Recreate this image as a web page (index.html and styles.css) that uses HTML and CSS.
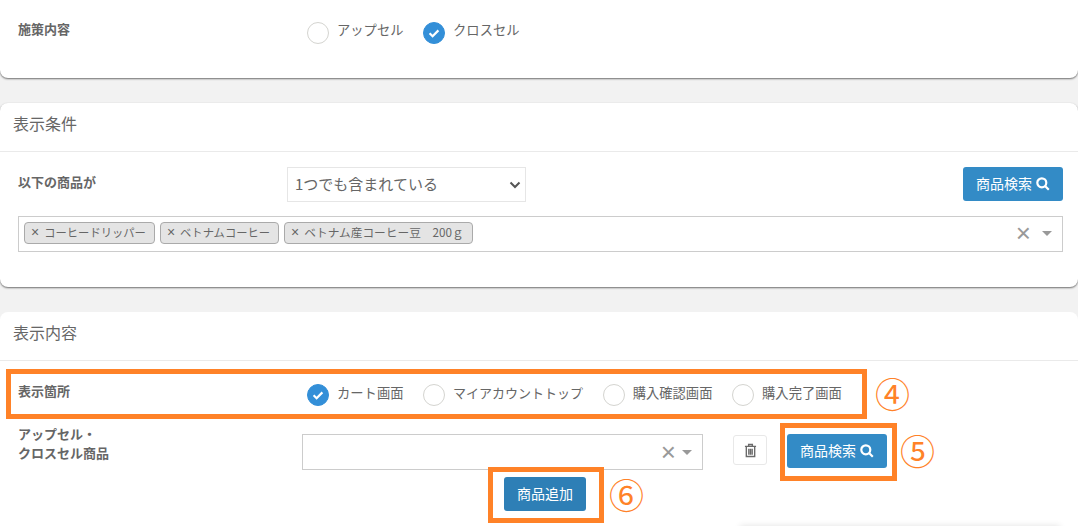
FILE: index.html
```html
<!DOCTYPE html>
<html lang="ja">
<head>
<meta charset="utf-8">
<title>表示設定</title>
<link rel="stylesheet" href="styles.css">
</head>
<body>
<section class="card card-first">
  <div class="row row-first">
    <div class="label">施策内容</div>
    <div class="radios">
      <label class="radio"><span class="mark"></span>アップセル</label>
      <label class="radio"><span class="mark on"><svg viewBox="0 0 22 22"><path d="M6.600 11.200l3 3 5.800-5.800"/></svg></span>クロスセル</label>
    </div>
  </div>
</section>

<section class="card card-cond">
  <h2 class="card-title">表示条件</h2>
  <div class="cond-body">
    <div class="cond-top">
      <div class="label label-cond">以下の商品が</div>
      <div class="select"><span>1つでも含まれている</span><svg class="chev" viewBox="0 0 12 8"><path d="M1.500 1.500L6 6l4.500-4.500"/></svg></div>
      <button class="btn btn-top"><span>商品検索</span><svg class="search" viewBox="0 0 14 14"><circle cx="5.800" cy="5.800" r="4.500"/><path d="M9 9l3.800 3.800"/></svg></button>
    </div>
    <div class="multi">
      <span class="tag tag-a"><i>×</i>コーヒードリッパー</span>
      <span class="tag tag-a"><i>×</i>ベトナムコーヒー</span>
      <span class="tag"><i>×</i>ベトナム産コーヒー豆　200ｇ</span>
      <span class="clear">×</span><span class="caret"></span>
    </div>
  </div>
</section>

<section class="card card-content">
  <h2 class="card-title">表示内容</h2>
  <div class="place-row">
    <div class="label">表示箇所</div>
    <div class="radios radios-place">
      <label class="radio"><span class="mark on"><svg viewBox="0 0 22 22"><path d="M6.600 11.200l3 3 5.800-5.800"/></svg></span>カート画面</label>
      <label class="radio radio-kana"><span class="mark"></span>マイアカウントトップ</label>
      <label class="radio"><span class="mark"></span>購入確認画面</label>
      <label class="radio"><span class="mark"></span>購入完了画面</label>
    </div>
    <span class="hl hl-place"></span>
    <span class="num num4">④</span>
  </div>
  <div class="product-row">
    <div class="label label-product">アップセル・<br>クロスセル商品</div>
    <div class="product-select"><span class="clear">×</span><span class="caret"></span></div>
    <button class="trash" aria-label="削除"><svg viewBox="0 0 14 16"><path d="M1 3.500h12M5 3.500V1.500h4v2"/><path d="M2.500 4v10.500h9V4M5.200 6v6.500M7 6v6.500M8.800 6v6.500"/></svg></button>
    <div class="hl-wrap">
      <button class="btn"><span>商品検索</span><svg class="search" viewBox="0 0 14 14"><circle cx="5.800" cy="5.800" r="4.500"/><path d="M9 9l3.800 3.800"/></svg></button>
      <span class="hl hl-search"></span>
      <span class="num num5">⑤</span>
    </div>
  </div>
  <div class="add-row">
    <div class="hl-wrap">
      <button class="btn btn-add"><span>商品追加</span></button>
      <span class="hl hl-add"></span>
      <span class="num num6">⑥</span>
    </div>
  </div>
  <div class="next-panel"></div>
</section>
</body>
</html>
```
FILE: styles.css
```css
* { box-sizing: border-box; }
html, body { height: 100%; }
body {
  margin: 0;
  height: 526px;
  overflow: hidden;
  background: #f2f2f2;
  color: #666;
  font-family: "Noto Sans CJK JP", "Noto Sans", sans-serif;
  font-size: 13.300px;
}
.card {
  background: #fff;
  border-radius: 8px;
  box-shadow: 0 1px 2px rgba(0, 0, 0, .55);
  margin-bottom: 25px;
}
.card-first { height: 78px; border-radius: 0 0 8px 8px; }
.card-cond { height: 184px; }
.card-content { height: 230px; border-radius: 8px 8px 0 0; box-shadow: none; margin-bottom: 0; }
.card-title {
  margin: 0;
  height: 49px;
  padding: 8px 13px 0;
  border-bottom: 1px solid #eaeaea;
  font-size: 16px;
  font-weight: 400;
  line-height: 24px;
  color: #666;
}
.label { width: 289px; font-weight: 700; font-size: 13px; line-height: 20px; color: #666; flex: none; }
.row-first { display: flex; padding: 19px 0 0 18px; }
.radios { display: flex; gap: 19.600px; margin-top: -2px; }
.radio { display: flex; align-items: center; gap: 8px; height: 26px; line-height: 24px; }
.radio-kana { font-size: 13px; }
.mark {
  width: 22px;
  height: 22px;
  border: 1px solid #d4d4d0;
  border-radius: 50%;
  background: #fff;
  flex: none;
  margin-top: 5px;
}
.mark svg { display: block; width: 22px; height: 22px; margin: -1px; fill: none; stroke: #fff; stroke-width: 2.200; }
.mark.on { background: #338fd8; border-color: #338fd8; }
.cond-body { padding: 15px 15px 0 18px; }
.cond-top { display: flex; align-items: flex-start; height: 49px; }
.label-cond { width: 269px; padding-top: 5px; }
.select {
  width: 239px;
  height: 35px;
  border: 1px solid #e6e6e6;
  padding: 0 0 3px 7px;
  display: flex;
  align-items: center;
  justify-content: space-between;
  font-size: 15px;
}
.chev { width: 12px; height: 8px; margin: 3px 4px 0 0; fill: none; stroke: #555; stroke-width: 2; }
.btn {
  display: inline-flex;
  align-items: center;
  justify-content: center;
  gap: 4px;
  width: 100px;
  height: 34px;
  padding: 0;
  border: 0;
  border-radius: 3px;
  background: #338bc6;
  color: #fff;
  font: inherit;
  font-size: 14px;
}
.btn span { margin-bottom: 3px; }
.btn-top { margin-left: auto; }
.search { width: 14px; height: 14px; margin-bottom: 1px; fill: none; stroke: #fff; stroke-width: 2.200; }
.multi {
  display: flex;
  align-items: center;
  gap: 5px;
  height: 36px;
  padding: 0 10px 2px 5px;
  border: 1px solid #ccc;
  background: #fff;
}
.tag {
  display: flex;
  align-items: center;
  height: 22px;
  padding: 0 8px 3px 6px;
  border: 1px solid #aaa;
  border-radius: 4px;
  background: #e4e4e4;
  font-size: 11.700px;
  white-space: nowrap;
}
.tag-a { font-size: 11.300px; }
.tag i {
  font-family: "Liberation Sans", sans-serif;
  font-size: 14px;
  line-height: 16px;
  font-style: normal;
  margin-right: 5px;
}
.clear {
  margin-left: auto;
  font-family: "Liberation Sans", sans-serif;
  font-size: 26px;
  line-height: 20px;
  color: #999;
}
.caret {
  margin-left: 6px;
  width: 0;
  height: 0;
  border: 5px solid transparent;
  border-top: 5px solid #999;
  border-bottom: 0;
}
.place-row { position: relative; display: flex; align-items: center; height: 60px; padding-left: 18px; }
.radios-place { margin-top: 3px; }
.hl { position: absolute; border: 5px solid #ff8228; pointer-events: none; }
.hl-place { left: 6px; top: 8px; width: 861px; height: 50px; }
.num {
  position: absolute;
  color: #ff8228;
  font-size: 35px;
  line-height: 40px;
  white-space: nowrap;
}
.num4 { left: 875px; top: 12px; }
.product-row { display: flex; align-items: flex-start; height: 57px; padding: 0 0 0 18px; }
.label-product { width: 284px; margin-top: 3px; line-height: 19px; }
.product-select {
  width: 401px;
  height: 36px;
  margin-top: 13px;
  border: 1px solid #ccc;
  padding-right: 10px;
  display: flex;
  align-items: center;
}
.trash {
  width: 34px;
  height: 30px;
  margin: 14px 0 0 30px;
  padding: 0;
  border: 1px solid #e8e8e8;
  border-radius: 3px;
  background: #fff;
  display: flex;
  align-items: center;
  justify-content: center;
}
.trash svg { width: 13px; height: 15px; fill: none; stroke: #6a6a6a; stroke-width: 1.500; }
.hl-wrap { position: relative; }
.product-row .hl-wrap { margin: 13px 0 0 20px; }
.hl-search { left: -7px; top: -11px; width: 117px; height: 58px; }
.num5 { left: 113px; top: -4px; }
.add-row { display: flex; padding-left: 504px; margin-top: -1px; }
.btn-add { width: 82px; background: #2e7fb6; }
.hl-add { left: -16px; top: -10px; width: 116px; height: 56px; }
.num6 { left: 105px; top: -3px; }
.next-panel {
  height: 12px;
  margin: 15px 18px 0 740px;
  background: #fff;
  box-shadow: 0 0 6px rgba(0, 0, 0, .12);
}
```
